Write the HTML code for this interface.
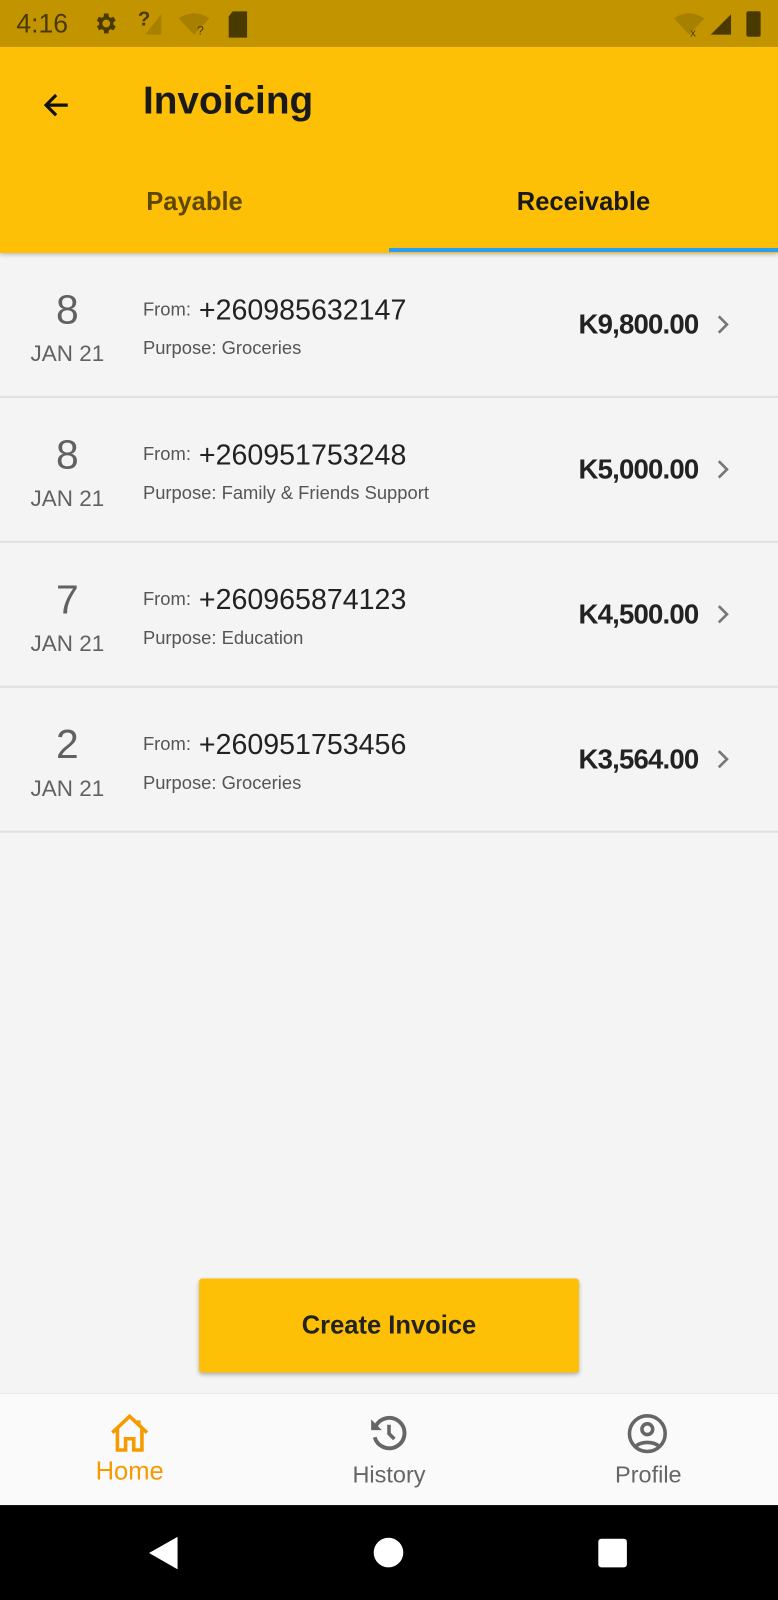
<!DOCTYPE html>
<html><head><meta charset="utf-8"><style>
*{margin:0;padding:0;box-sizing:border-box}
html,body{width:778px;height:1600px;overflow:hidden;background:#f4f4f4;font-family:"Liberation Sans",sans-serif}
#w{width:762px;height:1568px;transform:scale(1.0210,1.0204);transform-origin:0 0;position:relative;background:#f4f4f4}
.abs{position:absolute}
.sb{left:0;top:0;width:762px;height:46px;background:#c29400}
.ab{left:0;top:46px;width:762px;height:202px;background:#fec007;box-shadow:0 2px 4px rgba(0,0,0,.25)}
.row{left:0;width:762px;height:142px;border-bottom:2px solid #e0e0e0}
.day{left:0;width:132px;text-align:center;color:#616161}
.nav{left:0;top:1365px;width:762px;height:110px;background:#fafafa;border-top:1px solid #e6e6e6}
.sys{left:0;top:1475px;width:762px;height:93px;background:#000}
</style></head><body><div id="w">
<div class="abs sb">
<div class="abs" style="left:16px;top:8px;font-size:26px;color:#4a3a00">4:16</div>
<svg class="abs" style="left:90px;top:10px" width="26" height="26" viewBox="0 0 24 24"><path fill="#4a3a00" d="M19.4 13a7.5 7.5 0 000-2l2.1-1.6-2-3.5-2.5 1a7 7 0 00-1.7-1L15 3h-4l-.4 2.9a7 7 0 00-1.7 1l-2.5-1-2 3.5L6.6 11a7.5 7.5 0 000 2l-2.1 1.6 2 3.5 2.5-1a7 7 0 001.7 1L11 21h4l.4-2.9a7 7 0 001.7-1l2.5 1 2-3.5zM13 15.5a3.5 3.5 0 110-7 3.5 3.5 0 010 7z"/></svg>
<div class="abs" style="left:135px;top:8px;font-size:20px;color:#4a3a00;font-weight:bold">?</div>
<svg class="abs" style="left:140px;top:12px" width="20" height="22"><path d="M2 22L18 2v20z" fill="#a88000"/></svg>
<svg class="abs" style="left:175px;top:12px" width="30" height="22"><path d="M0 6Q15-4 30 6L15 22z" fill="#a88000"/><text x="18" y="22" font-size="12" fill="#4a3a00">?</text></svg>
<svg class="abs" style="left:222px;top:11px" width="22" height="26"><path d="M6 0h14v26H2V5z" fill="#4a3a00"/></svg>
<svg class="abs" style="left:660px;top:12px" width="30" height="24"><path d="M0 6Q15-4 30 6L15 22z" fill="#a88000"/><text x="16" y="24" font-size="11" fill="#4a3a00">x</text></svg>
<svg class="abs" style="left:694px;top:12px" width="24" height="22"><path d="M2 22L22 2v20z" fill="#4a3a00"/></svg>
<div class="abs" style="left:731px;top:11px;width:14px;height:25px;background:#4a3a00;border-radius:2px"></div>
</div>
<div class="abs ab">
<svg class="abs" style="left:38px;top:40px" width="34" height="34" viewBox="0 0 24 24"><path d="M20 12H5M12 5l-7 7 7 7" stroke="#111" stroke-width="2.2" fill="none"/></svg>
<div class="abs" style="left:140px;top:32px;font-size:38px;font-weight:bold;color:#1a1a1a">Invoicing</div>
<div class="abs" style="left:0;top:138px;width:381px;text-align:center;font-size:25px;color:#5e4800;font-weight:bold">Payable</div>
<div class="abs" style="left:381px;top:138px;width:381px;text-align:center;font-size:25px;color:#1a1a1a;font-weight:bold">Receivable</div>
<div class="abs" style="left:381px;top:197px;width:381px;height:4px;background:#2a9df4"></div>
</div>
<div class="abs row" style="top:248px"></div>
<div class="abs row" style="top:390px"></div>
<div class="abs row" style="top:532px"></div>
<div class="abs row" style="top:674px"></div>
<div id="rows"></div>
<script>
var d=[["8","+260985632147","Groceries","K9,800.00"],["8","+260951753248","Family &amp; Friends Support","K5,000.00"],["7","+260965874123","Education","K4,500.00"],["2","+260951753456","Groceries","K3,564.00"]];
var h="";d.forEach(function(r,i){var t=248+i*142;
h+='<div class="abs day" style="top:'+(t+34)+'px;font-size:40px">'+r[0]+'</div>';
h+='<div class="abs day" style="top:'+(t+86)+'px;font-size:22px">JAN 21</div>';
h+='<div class="abs" style="left:140px;top:'+(t+40)+'px;font-size:28px;color:#222"><span style="font-size:18px;color:#555;vertical-align:4px">From:</span> '+r[1]+'</div>';
h+='<div class="abs" style="left:140px;top:'+(t+83)+'px;font-size:18px;color:#555">Purpose: '+r[2]+'</div>';
h+='<div class="abs" style="right:78px;top:'+(t+55)+'px;font-size:27px;color:#222;font-weight:bold;letter-spacing:-0.8px">'+r[3]+'</div>';
h+='<svg class="abs" style="left:696px;top:'+(t+57)+'px" width="24" height="26" viewBox="0 0 24 24"><path d="M8 4l8 8-8 8" stroke="#777" stroke-width="2.6" fill="none"/></svg>';});
document.getElementById("rows").innerHTML=h;
</script>
<div class="abs" style="left:195px;top:1253px;width:372px;height:92px;background:#fec007;border-radius:3px;box-shadow:0 2px 4px rgba(0,0,0,.3);text-align:center;line-height:92px;font-size:25px;color:#222;font-weight:bold">Create Invoice</div>
<div class="abs nav">
<svg class="abs" style="left:106px;top:18px" width="42" height="40" viewBox="0 0 42 40"><path d="M4 20L21 4l17 16M9 16v21h8V26h8v11h8V16M30 8v4" stroke="#f59b00" stroke-width="3.5" fill="none"/></svg>
<div class="abs" style="left:0;top:62px;width:254px;text-align:center;font-size:25px;color:#f59b00">Home</div>
<svg class="abs" style="left:360px;top:18px" width="42" height="42" viewBox="0 0 24 24"><path d="M4.5 8A8.5 8.5 0 1 1 4 14" stroke="#666" stroke-width="2.2" fill="none"/><path d="M2 4v6h6z" fill="#666"/><path d="M12 7v5l3 3" stroke="#666" stroke-width="2" fill="none"/></svg>
<div class="abs" style="left:254px;top:66px;width:254px;text-align:center;font-size:23px;color:#666">History</div>
<svg class="abs" style="left:613px;top:18px" width="42" height="42" viewBox="0 0 24 24"><circle cx="12" cy="12" r="10" stroke="#666" stroke-width="2" fill="none"/><circle cx="12" cy="9.5" r="3" stroke="#666" stroke-width="2" fill="none"/><path d="M5.5 19a8 5 0 0 1 13 0" stroke="#666" stroke-width="2" fill="none"/></svg>
<div class="abs" style="left:508px;top:66px;width:254px;text-align:center;font-size:23px;color:#666">Profile</div>
</div>
<div class="abs sys">
<svg class="abs" style="left:144px;top:31px" width="30" height="32"><path d="M30 0v32L2 16z" fill="#fff"/></svg>
<div class="abs" style="left:366px;top:32px;width:29px;height:29px;border-radius:50%;background:#fff"></div>
<div class="abs" style="left:586px;top:33px;width:28px;height:28px;border-radius:3px;background:#fff"></div>
</div>
</div></body></html>
